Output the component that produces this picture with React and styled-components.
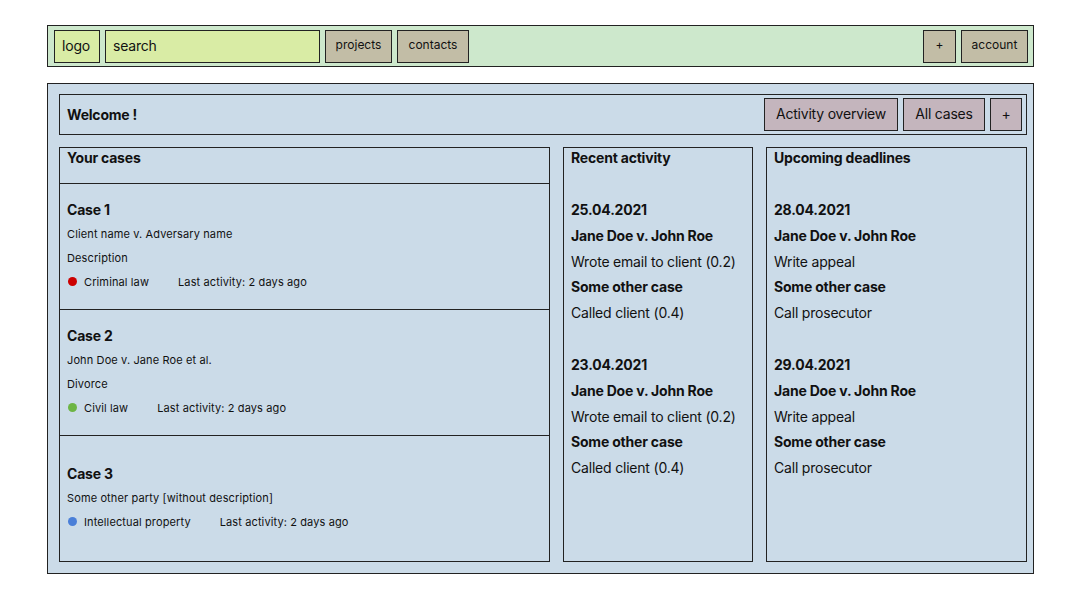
import React from 'react';
import styled, { createGlobalStyle } from 'styled-components';

const GlobalStyle = createGlobalStyle`
    * { box-sizing: border-box; }
    body {
        margin: 0;
        font-family: Inter, "Noto Sans", Arial, sans-serif;
        color: #111;
        background: #fff;
    }
`

const Page = styled.div`
    width: 987px;
    margin: 25px 0 0 47px;
    display: flex;
    flex-direction: column;
    gap: 16px;
`

const TopBar = styled.header`
    display: flex;
    align-items: center;
    gap: 5px;
    height: 42px;
    padding: 3px 5px 3px 6px;
    background: #cde8cc;
    border: 1px solid #222;
`

const Box = styled.div`
    height: 33px;
    display: flex;
    align-items: center;
    padding: 0 7px ${p => (p.$size ? 3 : 1)}px;
    border: 1px solid #222;
    background: ${p => p.$bg || '#d9eca5'};
    font-size: ${p => p.$size || 14}px;
    letter-spacing: ${p => (p.$size ? '0' : '-0.2px')};
    width: ${p => (p.$width ? `${p.$width}px` : 'auto')};
    justify-content: ${p => (p.$center ? 'center' : 'flex-start')};
`

const Spacer = styled.div`
    flex: 1;
`

const Main = styled.main`
    height: 491px;
    display: flex;
    flex-direction: column;
    gap: 12px;
    padding: 10px 6px 11px 11px;
    background: #cbdbe8;
    border: 1px solid #222;
`

const WelcomeBar = styled.div`
    height: 41px;
    display: flex;
    align-items: center;
    gap: 5px;
    padding: 0 4px 1px 7px;
    border: 1px solid #222;
    font-size: 14px;
    font-weight: 700;
    letter-spacing: -0.2px;
`

const ActionButton = styled.div`
    height: 33px;
    width: ${p => p.$width}px;
    display: flex;
    align-items: center;
    justify-content: center;
    padding-bottom: 1px;
    background: #c4b5bd;
    border: 1px solid #222;
    font-size: 14px;
    font-weight: 400;
`

const Columns = styled.div`
    flex: 1;
    display: grid;
    grid-template-columns: 491px 190px 1fr;
    column-gap: 13px;
`

const Column = styled.section`
    border: 1px solid #222;
    display: flex;
    flex-direction: column;
    padding: ${p => (p.$flush ? '0' : '1px 7px 0')};
`

const ColumnTitle = styled.h2`
    margin: 0;
    font-size: 14px;
    font-weight: 700;
    line-height: 18px;
    letter-spacing: -0.2px;
`

const CasesHeader = styled.div`
    height: 36px;
    padding: 1px 7px 0;
    border-bottom: 1px solid #222;
`

const CaseItem = styled.div`
    flex: 1;
    display: flex;
    flex-direction: column;
    justify-content: center;
    padding: 2px 7px 4px;
    border-bottom: ${p => (p.$last ? 'none' : '1px solid #222')};
`

const CaseTitle = styled.div`
    font-size: 14px;
    font-weight: 700;
    line-height: 18px;
    letter-spacing: -0.2px;
    margin-bottom: 6px;
`

const CaseLine = styled.div`
    font-size: 11px;
    line-height: 18px;
    letter-spacing: 0.12px;
    margin-bottom: 6px;
`

const Meta = styled.div`
    display: flex;
    align-items: center;
    font-size: 11px;
    line-height: 18px;
    letter-spacing: 0.12px;
`

const Dot = styled.span`
    width: 9px;
    height: 9px;
    border-radius: 50%;
    background: ${p => p.$color};
    margin: 0 7px 0 1px;
`

const Area = styled.span`
    margin-right: 29px;
`

const Feed = styled.div`
    margin-top: 30px;
    display: flex;
    flex-direction: column;
    gap: 26px;
`

const Group = styled.div`
    display: flex;
    flex-direction: column;
`

const Line = styled.div`
    font-size: 14px;
    line-height: 25.8px;
    letter-spacing: -0.2px;
    font-weight: ${p => (p.$bold ? 700 : 400)};
`

const cases = [
    { title: 'Case 1', parties: 'Client name v. Adversary name', description: 'Description', area: 'Criminal law', color: '#cc0000' },
    { title: 'Case 2', parties: 'John Doe v. Jane Roe et al.', description: 'Divorce', area: 'Civil law', color: '#6db544' },
    { title: 'Case 3', parties: 'Some other party [without description]', area: 'Intellectual property', color: '#4a7fd8' },
];

const activity = [
    { date: '25.04.2021', items: [['Jane Doe v. John Roe', 'Wrote email to client (0.2)'], ['Some other case', 'Called client (0.4)']] },
    { date: '23.04.2021', items: [['Jane Doe v. John Roe', 'Wrote email to client (0.2)'], ['Some other case', 'Called client (0.4)']] },
];

const deadlines = [
    { date: '28.04.2021', items: [['Jane Doe v. John Roe', 'Write appeal'], ['Some other case', 'Call prosecutor']] },
    { date: '29.04.2021', items: [['Jane Doe v. John Roe', 'Write appeal'], ['Some other case', 'Call prosecutor']] },
];

const FeedList = ({ groups }) => (
    <Feed>
        {groups.map(g => (
            <Group key={g.date}>
                <Line $bold>{g.date}</Line>
                {g.items.map(([name, task], i) => (
                    <React.Fragment key={i}>
                        <Line $bold>{name}</Line>
                        <Line>{task}</Line>
                    </React.Fragment>
                ))}
            </Group>
        ))}
    </Feed>
);

const App = () => {
    return (
        <>
            <GlobalStyle />
            <Page>
                <TopBar>
                    <Box $width={46}>logo</Box>
                    <Box $width={215}>search</Box>
                    <Box $bg="#c2bda6" $size={12} $width={67} $center>projects</Box>
                    <Box $bg="#c2bda6" $size={12} $width={72} $center>contacts</Box>
                    <Spacer />
                    <Box $bg="#c2bda6" $size={12} $width={33} $center>+</Box>
                    <Box $bg="#c2bda6" $size={12} $width={67} $center>account</Box>
                </TopBar>
                <Main>
                    <WelcomeBar>
                        Welcome !
                        <Spacer />
                        <ActionButton $width={134}>Activity overview</ActionButton>
                        <ActionButton $width={82}>All cases</ActionButton>
                        <ActionButton $width={32}>+</ActionButton>
                    </WelcomeBar>
                    <Columns>
                        <Column $flush>
                            <CasesHeader>
                                <ColumnTitle>Your cases</ColumnTitle>
                            </CasesHeader>
                            {cases.map((c, i) => (
                                <CaseItem key={c.title} $last={i === cases.length - 1}>
                                    <CaseTitle>{c.title}</CaseTitle>
                                    <CaseLine>{c.parties}</CaseLine>
                                    {c.description && <CaseLine>{c.description}</CaseLine>}
                                    <Meta>
                                        <Dot $color={c.color} />
                                        <Area>{c.area}</Area>
                                        Last activity: 2 days ago
                                    </Meta>
                                </CaseItem>
                            ))}
                        </Column>
                        <Column>
                            <ColumnTitle>Recent activity</ColumnTitle>
                            <FeedList groups={activity} />
                        </Column>
                        <Column>
                            <ColumnTitle>Upcoming deadlines</ColumnTitle>
                            <FeedList groups={deadlines} />
                        </Column>
                    </Columns>
                </Main>
            </Page>
        </>
    );
};

export default App;
